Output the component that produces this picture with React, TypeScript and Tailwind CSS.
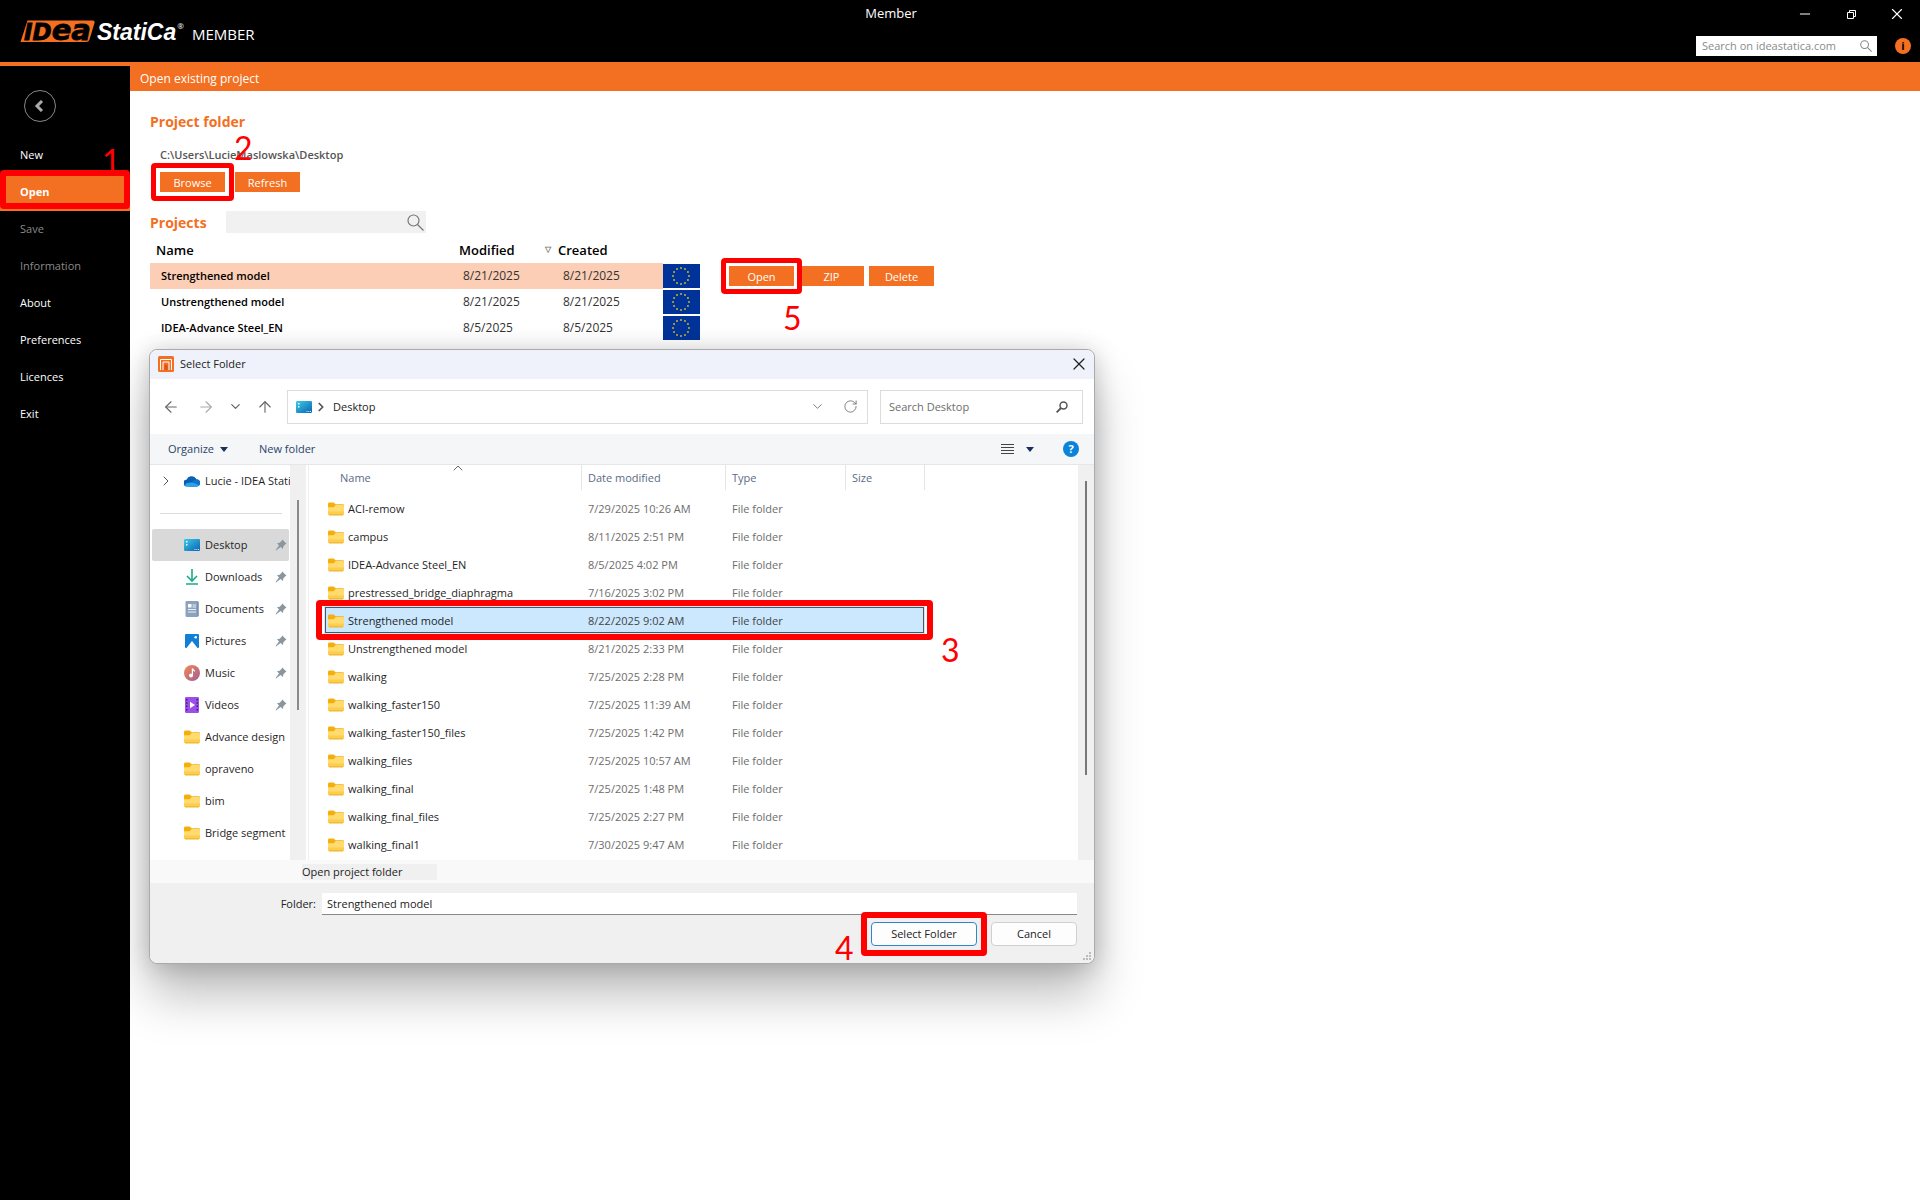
import { ChevronDown, ChevronRight, ChevronUp, ArrowLeft, ArrowRight, ArrowUp, Minus, RotateCw, X } from "lucide-react";
import clsx from "clsx";
import type { ReactNode } from "react";

type Project = { name: string; modified: string; created: string };
type FolderRow = { name: string; date: string };
type Place = { label: string; icon: ReactNode; pinned?: boolean };

const menu = ["New", "Open", "Save", "Information", "About", "Preferences", "Licences", "Exit"];
const disabledItems = ["Save", "Information"];

const projects: Project[] = [
  { name: "Strengthened model", modified: "8/21/2025", created: "8/21/2025" },
  { name: "Unstrengthened model", modified: "8/21/2025", created: "8/21/2025" },
  { name: "IDEA-Advance Steel_EN", modified: "8/5/2025", created: "8/5/2025" },
];

const folders: FolderRow[] = [
  { name: "ACI-remow", date: "7/29/2025 10:26 AM" },
  { name: "campus", date: "8/11/2025 2:51 PM" },
  { name: "IDEA-Advance Steel_EN", date: "8/5/2025 4:02 PM" },
  { name: "prestressed_bridge_diaphragma", date: "7/16/2025 3:02 PM" },
  { name: "Strengthened model", date: "8/22/2025 9:02 AM" },
  { name: "Unstrengthened model", date: "8/21/2025 2:33 PM" },
  { name: "walking", date: "7/25/2025 2:28 PM" },
  { name: "walking_faster150", date: "7/25/2025 11:39 AM" },
  { name: "walking_faster150_files", date: "7/25/2025 1:42 PM" },
  { name: "walking_files", date: "7/25/2025 10:57 AM" },
  { name: "walking_final", date: "7/25/2025 1:48 PM" },
  { name: "walking_final_files", date: "7/25/2025 2:27 PM" },
  { name: "walking_final1", date: "7/30/2025 9:47 AM" },
];

const FolderIcon = () => (
  <svg width="16" height="16" viewBox="0 0 16 16" className="shrink-0">
    <path d="M0 3.2C0 2.2.6 1.600 1.500 1.600h4.200l1.900 1.700H14.500c.9 0 1.500.5 1.500 1.400V8H0z" fill="#f3ae10" />
    <path d="M0 6.200h5.800L7.700 3.900H14.600c.8 0 1.400.5 1.400 1.300v7.600c0 .8-.6 1.400-1.400 1.400H1.400C.6 14.200 0 13.600 0 12.800z" fill="#ffdb70" />
    <path d="M0 10.500h16v2.300c0 .8-.6 1.400-1.400 1.400H1.400C.6 14.200 0 13.600 0 12.800z" fill="#fecd4a" />
    <path d="M1 13.900h14" stroke="#dca02c" strokeWidth=".6" />
  </svg>
);

const DesktopIcon = () => (
  <svg width="16" height="16" viewBox="0 0 16 16" className="shrink-0">
    <defs>
      <linearGradient id="desk" x1="0" y1="0" x2="1" y2="1">
        <stop offset="0" stopColor="#3ccbe4" />
        <stop offset="1" stopColor="#0b63b5" />
      </linearGradient>
    </defs>
    <rect y="2" width="16" height="12" rx="1.200" fill="url(#desk)" />
    <path d="M2 4h1.500v1.500H2zM2 7h1.500v1.500H2z" fill="#fff" />
    <path d="M10.500 12.500h1M12.300 12.500h1M14 12.500h1" stroke="#cfe9ff" />
  </svg>
);

const CloudIcon = () => (
  <svg width="16" height="16" viewBox="0 0 16 16" className="shrink-0">
    <path d="M3.500 13.500A3.500 3.500 0 0 1 2.800 6.400 5.200 5.200 0 0 1 12.300 6.300 3.600 3.600 0 0 1 12.600 13.500z" fill="#0a5fb4" />
    <path d="M5 13.500c1-3.500 4-6.500 8-7.100A3.600 3.600 0 0 1 12.600 13.500z" fill="#1273c8" />
    <path d="M.8 11.800C4 8.500 9 8.500 15 12.300 14.400 13.100 13.500 13.500 12.600 13.500H3.500C2.300 13.500 1.300 12.800.8 11.800z" fill="#28a4ea" />
  </svg>
);

const DownloadIcon = () => (
  <svg width="16" height="16" viewBox="0 0 16 16" className="shrink-0" fill="none" stroke="#1bab86" strokeWidth="1.600">
    <path d="M8 0v11.500M3 7l5 5 5-5M2 15h12" />
  </svg>
);

const DocumentIcon = () => (
  <svg width="16" height="16" viewBox="0 0 16 16" className="shrink-0">
    <rect x="1.500" width="13" height="16" rx="1.300" fill="#8ba3bd" />
    <rect x="4" y="3" width="3.500" height="3.500" fill="#fff" />
    <path d="M8.500 4h3.500M8.500 6h3.500M4 8.500h8M4 11h8" stroke="#e9f1f8" strokeWidth="1.200" />
    <path d="M14 1v14" stroke="#68819d" />
  </svg>
);

const PictureIcon = () => (
  <svg width="16" height="16" viewBox="0 0 16 16" className="shrink-0">
    <rect x="1" y="1" width="14" height="14" rx="1" fill="#117fd6" />
    <path d="M2.500 15 8 8l5.500 7z" fill="#fff" />
    <circle cx="11.700" cy="4.300" r="1.300" fill="#fff" />
  </svg>
);

const MusicIcon = () => (
  <svg width="16" height="16" viewBox="0 0 16 16" className="shrink-0">
    <defs>
      <linearGradient id="music" x1="0" y1="0" x2="1" y2="1">
        <stop offset="0" stopColor="#f08b4f" />
        <stop offset="1" stopColor="#a55a9c" />
      </linearGradient>
    </defs>
    <circle cx="8" cy="8" r="8" fill="url(#music)" />
    <circle cx="7" cy="10.500" r="2" fill="#fff" />
    <path d="M8.400 10.500V3.500c.4 1.500 2 1.500 2.200 3" stroke="#fff" strokeWidth="1.200" fill="none" />
  </svg>
);

const VideoIcon = () => (
  <svg width="16" height="16" viewBox="0 0 16 16" className="shrink-0">
    <rect x="1" width="14" height="16" rx="1.200" fill="#9a4fe8" />
    <path d="M2.800 2v12M13.200 2v12" stroke="#3d1478" strokeWidth="1.400" strokeDasharray="1.500 1.800" />
    <path d="M6 4.800v6.400L11 8z" fill="#fff" />
  </svg>
);

const PinIcon = () => (
  <svg width="12" height="12" viewBox="0 0 12 12" className="shrink-0">
    <path d="M7.300.5 11.500 4.700 10.300 5.300 8.300 7.400 8 10 5.600 8 1 11.500.6 11.100 4 6.400 2 4.200 4.700 3.700 6.700 1.700z" fill="#8b969e" />
  </svg>
);

const AppIcon = () => (
  <svg width="16" height="16" viewBox="0 0 16 16" className="shrink-0">
    <rect width="16" height="16" rx="1.500" fill="#f36f21" />
    <path d="M2.500 14V3.500h11V14M5 14V6h6v8" stroke="#fff" strokeWidth="1" fill="none" />
    <path d="M6.500 9h3v5h-3z" fill="#d9541a" />
  </svg>
);

const Magnifier = ({ size, stroke }: { size: number; stroke: number }) => (
  <svg width={size} height={size} viewBox="0 0 17 17" className="shrink-0" fill="none" stroke="currentColor" strokeWidth={stroke}>
    <circle cx="6.500" cy="6.500" r="5.500" />
    <path d="m10.500 10.500 6 6" />
  </svg>
);

const Caret = () => (
  <svg width="8" height="5" viewBox="0 0 8 5">
    <path d="M0 0h8L4 5z" fill="#17305c" />
  </svg>
);

const EuFlag = () => (
  <svg width="37" height="24" viewBox="0 0 37 24" className="block">
    <rect width="37" height="24" fill="#039" />
    {Array.from({ length: 12 }, (_, i) => {
      const a = (i * Math.PI) / 6;
      return <circle key={i} cx={18 + 8 * Math.sin(a)} cy={12 - 8 * Math.cos(a)} r="1" fill="#c9b12b" />;
    })}
  </svg>
);

const Logo = () => (
  <svg width="164" height="24" viewBox="0 0 164 24" role="img" aria-label="IDEA StatiCa" className="overflow-visible">
    <path d="M7.500 1.500H72.500Q75.300 1.500 74.500 4L69.500 20.500Q68.800 23 66 23H.5z" fill="#f36f21" />
    <text x="4" y="20.500" fontSize="23" fontFamily="DejaVu Sans" fontWeight="700" fontStyle="italic" fill="#000" stroke="#000" strokeWidth=".8">
      ID<tspan fontSize="29">ea</tspan>
    </text>
    <text x="77" y="21" fontSize="23" fontFamily="Liberation Sans" fontWeight="700" fontStyle="italic" fill="#fff">
      StatiCa
    </text>
    <text x="164" y="10" fontSize="8" fontFamily="Open Sans" textAnchor="end" fill="#fff">
      ®
    </text>
  </svg>
);

const places: Place[] = [
  { label: "Desktop", icon: <DesktopIcon />, pinned: true },
  { label: "Downloads", icon: <DownloadIcon />, pinned: true },
  { label: "Documents", icon: <DocumentIcon />, pinned: true },
  { label: "Pictures", icon: <PictureIcon />, pinned: true },
  { label: "Music", icon: <MusicIcon />, pinned: true },
  { label: "Videos", icon: <VideoIcon />, pinned: true },
  { label: "Advance design", icon: <FolderIcon /> },
  { label: "opraveno", icon: <FolderIcon /> },
  { label: "bim", icon: <FolderIcon /> },
  { label: "Bridge segment", icon: <FolderIcon /> },
];

// Red callout frame drawn over the control it wraps
const Frame = ({ className }: { className: string }) => (
  <span className={clsx("pointer-events-none absolute z-20 rounded-[4px] border-[#f00]", className)} />
);

const Step = ({ n, className }: { n: number; className: string }) => (
  <span className={clsx("pointer-events-none absolute z-10 font-[Lato] text-[32px] leading-8 font-normal text-[#f00]", className)}>{n}</span>
);

const OrangeButton = ({ children }: { children: ReactNode }) => (
  <button className="h-5 w-[65px] bg-[#f36f21] pt-px text-[11px] leading-5 text-white">{children}</button>
);

const Header = () => (
  <header className="grid h-[66px] border-b-4 border-[#f36f21] bg-black text-white">
    <div className="col-start-1 row-start-1 flex h-7 items-center">
      <div className="flex-1 text-center text-[13px]">Member</div>
      <button aria-label="Minimize" className="flex w-[46px] justify-center"><Minus size={16} strokeWidth={1.500} /></button>
      <button aria-label="Restore" className="flex w-[46px] justify-center">
        <svg width="9" height="9" viewBox="0 0 9 9" fill="none" stroke="#fff">
          <path d="M.5 2.500h6v6h-6zM2.500 2V.5h6v6H7" />
        </svg>
      </button>
      <button aria-label="Close" className="flex w-[46px] justify-center"><X size={18} strokeWidth={1.500} /></button>
    </div>
    <div className="col-start-1 row-start-1 mt-[19px] flex items-start pl-5">
      <Logo />
      <span className="ml-2 pt-[5px] text-[15px] leading-5">MEMBER</span>
      <div className="ml-auto flex items-center gap-[18px] pt-[17px] pr-[9px]">
        <label className="flex h-5 w-[181px] items-center bg-white pr-[5px] text-[#888]">
          <input aria-label="Search on ideastatica.com" placeholder="Search on ideastatica.com" className="w-full min-w-0 px-[6px] text-[11px] outline-none placeholder:text-[#8a8a8a]" />
          <Magnifier size={12} stroke={1.500} />
        </label>
        <button aria-label="Info" className="size-4 rounded-full bg-[#f36f21] text-[11px] leading-4 font-bold text-black">i</button>
      </div>
    </div>
  </header>
);

const Sidebar = () => (
  <nav className="w-[130px] shrink-0 bg-black pt-6 text-[11px] text-white">
    <button aria-label="Back" className="ml-6 flex size-8 items-center justify-center rounded-full border border-[#888] pr-[2px]">
      <svg width="10" height="12" viewBox="0 0 10 12" fill="none" stroke="#aaa" strokeWidth="3">
        <path d="M8 1 3 6l5 5" />
      </svg>
    </button>
    <ul className="mt-[15px]">
      {menu.map((item) => (
        <li key={item} className="relative">
          <a
            href="#"
            className={clsx(
              "flex h-[37px] items-center pl-5",
              item === "Open" && "bg-[#f36f21] font-bold",
              disabledItems.includes(item) && "text-[#8a8a8a]"
            )}
          >
            {item}
          </a>
          {item === "Open" && (
            <>
              <Frame className="inset-x-0 -top-1 bottom-[2px] border-[6px]" />
              <Step n={1} className="-top-[29px] left-[102px]" />
            </>
          )}
        </li>
      ))}
    </ul>
  </nav>
);

const ProjectTable = () => (
  <table className="mt-1 table-fixed border-collapse text-left text-[12px] text-black">
    <colgroup>
      <col className="w-[303px]" />
      <col className="w-[99px]" />
      <col className="w-[111px]" />
      <col className="w-[37px]" />
      <col className="w-[264px]" />
    </colgroup>
    <thead>
      <tr className="h-[26px] text-[13px]">
        <th className="pt-px pl-[6px] font-semibold">Name</th>
        <th className="pt-px pl-[6px] font-semibold">Modified</th>
        <th className="relative pt-px pl-[6px] font-semibold">
          <span className="absolute top-2 -left-[7px] text-[8px] leading-2 text-[#777]">▽</span>
          Created
        </th>
        <th aria-label="Code" />
        <th aria-label="Actions" />
      </tr>
    </thead>
    <tbody>
      {projects.map((p, i) => (
        <tr key={p.name} className="h-[26px]">
          <td className={clsx("p-0 pl-[11px] text-[11px] font-semibold", i === 0 && "bg-[#fbceb5]")}>{p.name}</td>
          <td className={clsx("p-0 pl-[10px] text-[#333]", i === 0 && "bg-[#fbceb5]")}>{p.modified}</td>
          <td className={clsx("p-0 pl-[11px] text-[#333]", i === 0 && "bg-[#fbceb5]")}>{p.created}</td>
          <td className="p-0"><EuFlag /></td>
          <td className="p-0 pl-[29px]">
            {i === 0 && (
              <div className="flex gap-[5px]">
                <div className="relative flex">
                  <OrangeButton>Open</OrangeButton>
                  <Frame className="-inset-2 border-[5px]" />
                  <Step n={5} className="top-9 left-[54px]" />
                </div>
                <OrangeButton>ZIP</OrangeButton>
                <OrangeButton>Delete</OrangeButton>
              </div>
            )}
          </td>
        </tr>
      ))}
    </tbody>
  </table>
);

const DialogToolbar = () => (
  <>
    <div className="flex h-[55px] items-center pr-[11px] pl-3 text-[#666]">
      <button aria-label="Back" className="w-[35px]"><ArrowLeft size={18} strokeWidth={1.500} /></button>
      <button aria-label="Forward" className="w-[31px] text-[#aaa]"><ArrowRight size={18} strokeWidth={1.500} /></button>
      <button aria-label="Recent locations" className="w-7"><ChevronDown size={15} strokeWidth={2} /></button>
      <button aria-label="Up" className="w-[31px]"><ArrowUp size={18} strokeWidth={1.500} /></button>
      <div className="flex h-[34px] flex-1 items-center border border-[#dcdcdc] px-2 text-[#222]">
        <DesktopIcon />
        <ChevronRight size={14} strokeWidth={3} className="mx-[2px] text-[#555]" />
        <span className="ml-[3px] flex-1">Desktop</span>
        <button aria-label="Previous locations" className="mr-[18px] text-[#777]"><ChevronDown size={15} strokeWidth={1.500} /></button>
        <button aria-label="Refresh" className="mr-px text-[#777]"><RotateCw size={15} strokeWidth={1.500} /></button>
      </div>
      <label className="ml-[12px] flex h-[34px] w-[203px] items-center border border-[#dcdcdc] pr-[14px]">
        <input aria-label="Search Desktop" placeholder="Search Desktop" className="w-full min-w-0 px-2 outline-none placeholder:text-[#6d6d6d]" />
        <svg width="12" height="12" viewBox="0 0 12 12" className="shrink-0" fill="none" stroke="#555" strokeWidth="1.500">
          <circle cx="7.500" cy="4.500" r="3.500" />
          <path d="M5 7 .6 11.400" strokeWidth="1.800" />
        </svg>
      </label>
    </div>
    <div className="flex h-[31px] items-center border-b border-[#e6e6e6] bg-[#f4f6f8] pr-[15px] pl-[18px] text-[#2b4468]">
      <button className="flex w-[91px] items-center gap-[6px]">
        Organize
        <Caret />
      </button>
      <button>New folder</button>
      <button aria-label="Change view" className="ml-auto flex items-center gap-3">
        <svg width="13" height="12" viewBox="0 0 13 12" stroke="#444"><path d="M0 1.500h13M0 4.500h13M0 7.500h13M0 10.500h13" /></svg>
        <Caret />
      </button>
      <button aria-label="Help" className="ml-[29px] size-4 rounded-full bg-[#0a84d8] text-[11px] leading-4 font-bold text-white">?</button>
    </div>
  </>
);

const PlacesPane = () => (
  <div className="flex w-[156px] shrink-0 text-[#1f1f1f]">
    <div className="w-[140px] overflow-hidden pl-[2px] whitespace-nowrap">
      <a href="#" className="flex h-8 items-center pl-[6px]">
        <ChevronRight size={16} strokeWidth={1.500} className="mr-[10px] shrink-0 text-[#555]" />
        <CloudIcon />
        <span className="ml-[5px]">Lucie - IDEA StatiCa</span>
      </a>
      <hr className="mt-4 mr-2 ml-2 border-[#dcdcdc]" />
      <ul className="mt-[15px] pb-[11px]">
        {places.map((p) => (
          <li key={p.label}>
            <a href="#" className={clsx("mr-px flex h-8 items-center rounded-[2px] pl-8", p.label === "Desktop" && "bg-[#d9d9d9]")}>
              {p.icon}
              <span className="ml-[5px] flex-1">{p.label}</span>
              {p.pinned && <span className="mr-[2px]"><PinIcon /></span>}
            </a>
          </li>
        ))}
      </ul>
    </div>
    <div className="w-4 bg-[#f0f0f0] pt-[35px] pl-[7px]">
      <div className="h-[210px] w-[2px] bg-[#8a8a8a]" />
    </div>
  </div>
);

const FolderList = () => (
  <div className="ml-[2px] flex min-w-0 flex-1 border-l border-[#eee]">
    <div className="relative flex-1 pl-[15px]">
      <ChevronUp size={16} strokeWidth={1.500} className="absolute -top-[5px] left-[141px] text-[#666]" />
      <table className="table-fixed border-separate border-spacing-0 text-left text-[#6d6d6d]">
        <colgroup>
          <col className="w-[258px]" />
          <col className="w-[144px]" />
          <col className="w-[120px]" />
          <col className="w-[79px]" />
        </colgroup>
        <thead>
          <tr className="h-[25px] text-[#5b6b86]">
            <th className="border-r border-[#e5e5e5] pl-4 font-normal">Name</th>
            <th className="border-r border-[#e5e5e5] pl-[6px] font-normal">Date modified</th>
            <th className="border-r border-[#e5e5e5] pl-[6px] font-normal">Type</th>
            <th className="border-r border-[#e5e5e5] pl-[6px] font-normal">Size</th>
          </tr>
        </thead>
        <tbody>
          <tr className="h-1" aria-hidden="true"><td colSpan={4} /></tr>
          {folders.map((f) => {
            const selected = f.name === "Strengthened model";
            return (
              <tr key={f.name} className={clsx("relative h-7", selected && "bg-[#cce8ff] text-[#444] outline outline-1 -outline-offset-2 outline-[#555]")}>
                <td className="p-0 pt-px pl-1">
                  <span className="flex items-center gap-1 text-[#1f1f1f]"><FolderIcon />{f.name}</span>
                  {selected && (
                    <>
                      <Frame className="-inset-x-2 -inset-y-[6px] border-[6px]" />
                      <Step n={3} className="top-7 left-[617px]" />
                    </>
                  )}
                </td>
                <td className="p-0 pt-px pl-[6px]">{f.date}</td>
                <td className="p-0 pt-px pl-[6px]">File folder</td>
                <td />
              </tr>
            );
          })}
        </tbody>
      </table>
    </div>
    <div className="w-4 bg-[#f0f0f0] pt-4 pl-[7px]">
      <div className="h-[294px] w-[2px] bg-[#777]" />
    </div>
  </div>
);

const SelectFolderDialog = () => (
  <section
    role="dialog"
    aria-label="Select Folder"
    className="absolute top-[283px] left-[19px] w-[946px] rounded-lg border border-[#aaa] bg-white text-[11px] leading-4 shadow-[0_32px_48px_rgba(0,0,0,0.25),0_2px_24px_rgba(0,0,0,0.2)]"
  >
    <div className="flex h-[29px] items-center rounded-t-lg bg-[#eff2fa] pr-[5px] pb-px pl-2">
      <AppIcon />
      <h2 className="ml-[6px] flex-1 text-[#222]">Select Folder</h2>
      <button aria-label="Close" className="text-[#222]"><X size={20} strokeWidth={1.500} /></button>
    </div>
    <DialogToolbar />
    <div className="flex">
      <PlacesPane />
      <FolderList />
    </div>
    <div className="flex h-[23px] items-center bg-[#f9f9f9] pl-[152px] text-[#222]">
      <button className="h-4 w-[135px] bg-[#f0f0f0] text-left leading-4">Open project folder</button>
    </div>
    <div className="relative h-[80px] rounded-b-lg bg-[#f0f0f0] pt-[10px] pr-[17px] text-[#222]">
      <div className="flex items-center">
        <label htmlFor="folder" className="w-[166px] text-right">Folder:</label>
        <input id="folder" defaultValue="Strengthened model" className="ml-[6px] h-[22px] flex-1 border-b border-[#888] bg-white px-[5px] outline-none" />
      </div>
      <div className="mt-[7px] flex justify-end gap-[14px]">
        <div className="relative flex">
          <button className="h-6 w-[106px] rounded-[4px] border border-[#2f86cc] bg-[#fdfdfd]">Select Folder</button>
          <Frame className="-inset-[10px] border-[6px]" />
          <Step n={4} className="top-[10px] -left-9" />
        </div>
        <button className="h-6 w-[86px] rounded-[4px] border border-[#d0d0d0] bg-[#fdfdfd]">Cancel</button>
      </div>
      <svg width="9" height="9" viewBox="0 0 9 9" className="absolute right-[2px] bottom-[2px]" fill="#bbb">
        <path d="M6 0h2v2H6zM3 3h2v2H3zM6 3h2v2H6zM0 6h2v2H0zM3 6h2v2H3zM6 6h2v2H6z" />
      </svg>
    </div>
  </section>
);

const App = () => {
  return (
    <div className="flex min-h-screen flex-col bg-white font-['Open_Sans','Noto_Sans',sans-serif]">
      <Header />
      <div className="flex flex-1">
        <Sidebar />
        <main className="relative min-w-0 flex-1">
          <h1 className="h-[25px] bg-[#f36f21] pl-[10px] text-[12px] leading-[26px] text-white">Open existing project</h1>
          <div className="pt-[21px] pl-5">
            <h2 className="text-[14px] leading-5 font-bold text-[#f36f21]">Project folder</h2>
            <div className="relative mt-[13px] pl-[10px]">
              <p className="text-[11px] leading-5 font-semibold text-[#555]">C:\Users\LucieMaslowska\Desktop</p>
              <Step n={2} className="-top-[13px] left-[84px]" />
              <div className="mt-[7px] flex gap-[10px]">
                <div className="relative flex">
                  <OrangeButton>Browse</OrangeButton>
                  <Frame className="-inset-x-[9px] -inset-y-[9px] border-[5px]" />
                </div>
                <OrangeButton>Refresh</OrangeButton>
              </div>
            </div>
            <div className="mt-[19px] flex items-center">
              <h2 className="w-[76px] pt-[2px] text-[14px] leading-5 font-bold text-[#f36f21]">Projects</h2>
              <label className="flex h-[22px] w-[200px] items-center bg-[#f1f1f1] pr-[2px] text-[#777]">
                <input aria-label="Search projects" className="w-full min-w-0 px-2 text-[12px] outline-none" />
                <Magnifier size={17} stroke={1.200} />
              </label>
            </div>
            <ProjectTable />
          </div>
          <SelectFolderDialog />
        </main>
      </div>
    </div>
  );
};

export default App;
